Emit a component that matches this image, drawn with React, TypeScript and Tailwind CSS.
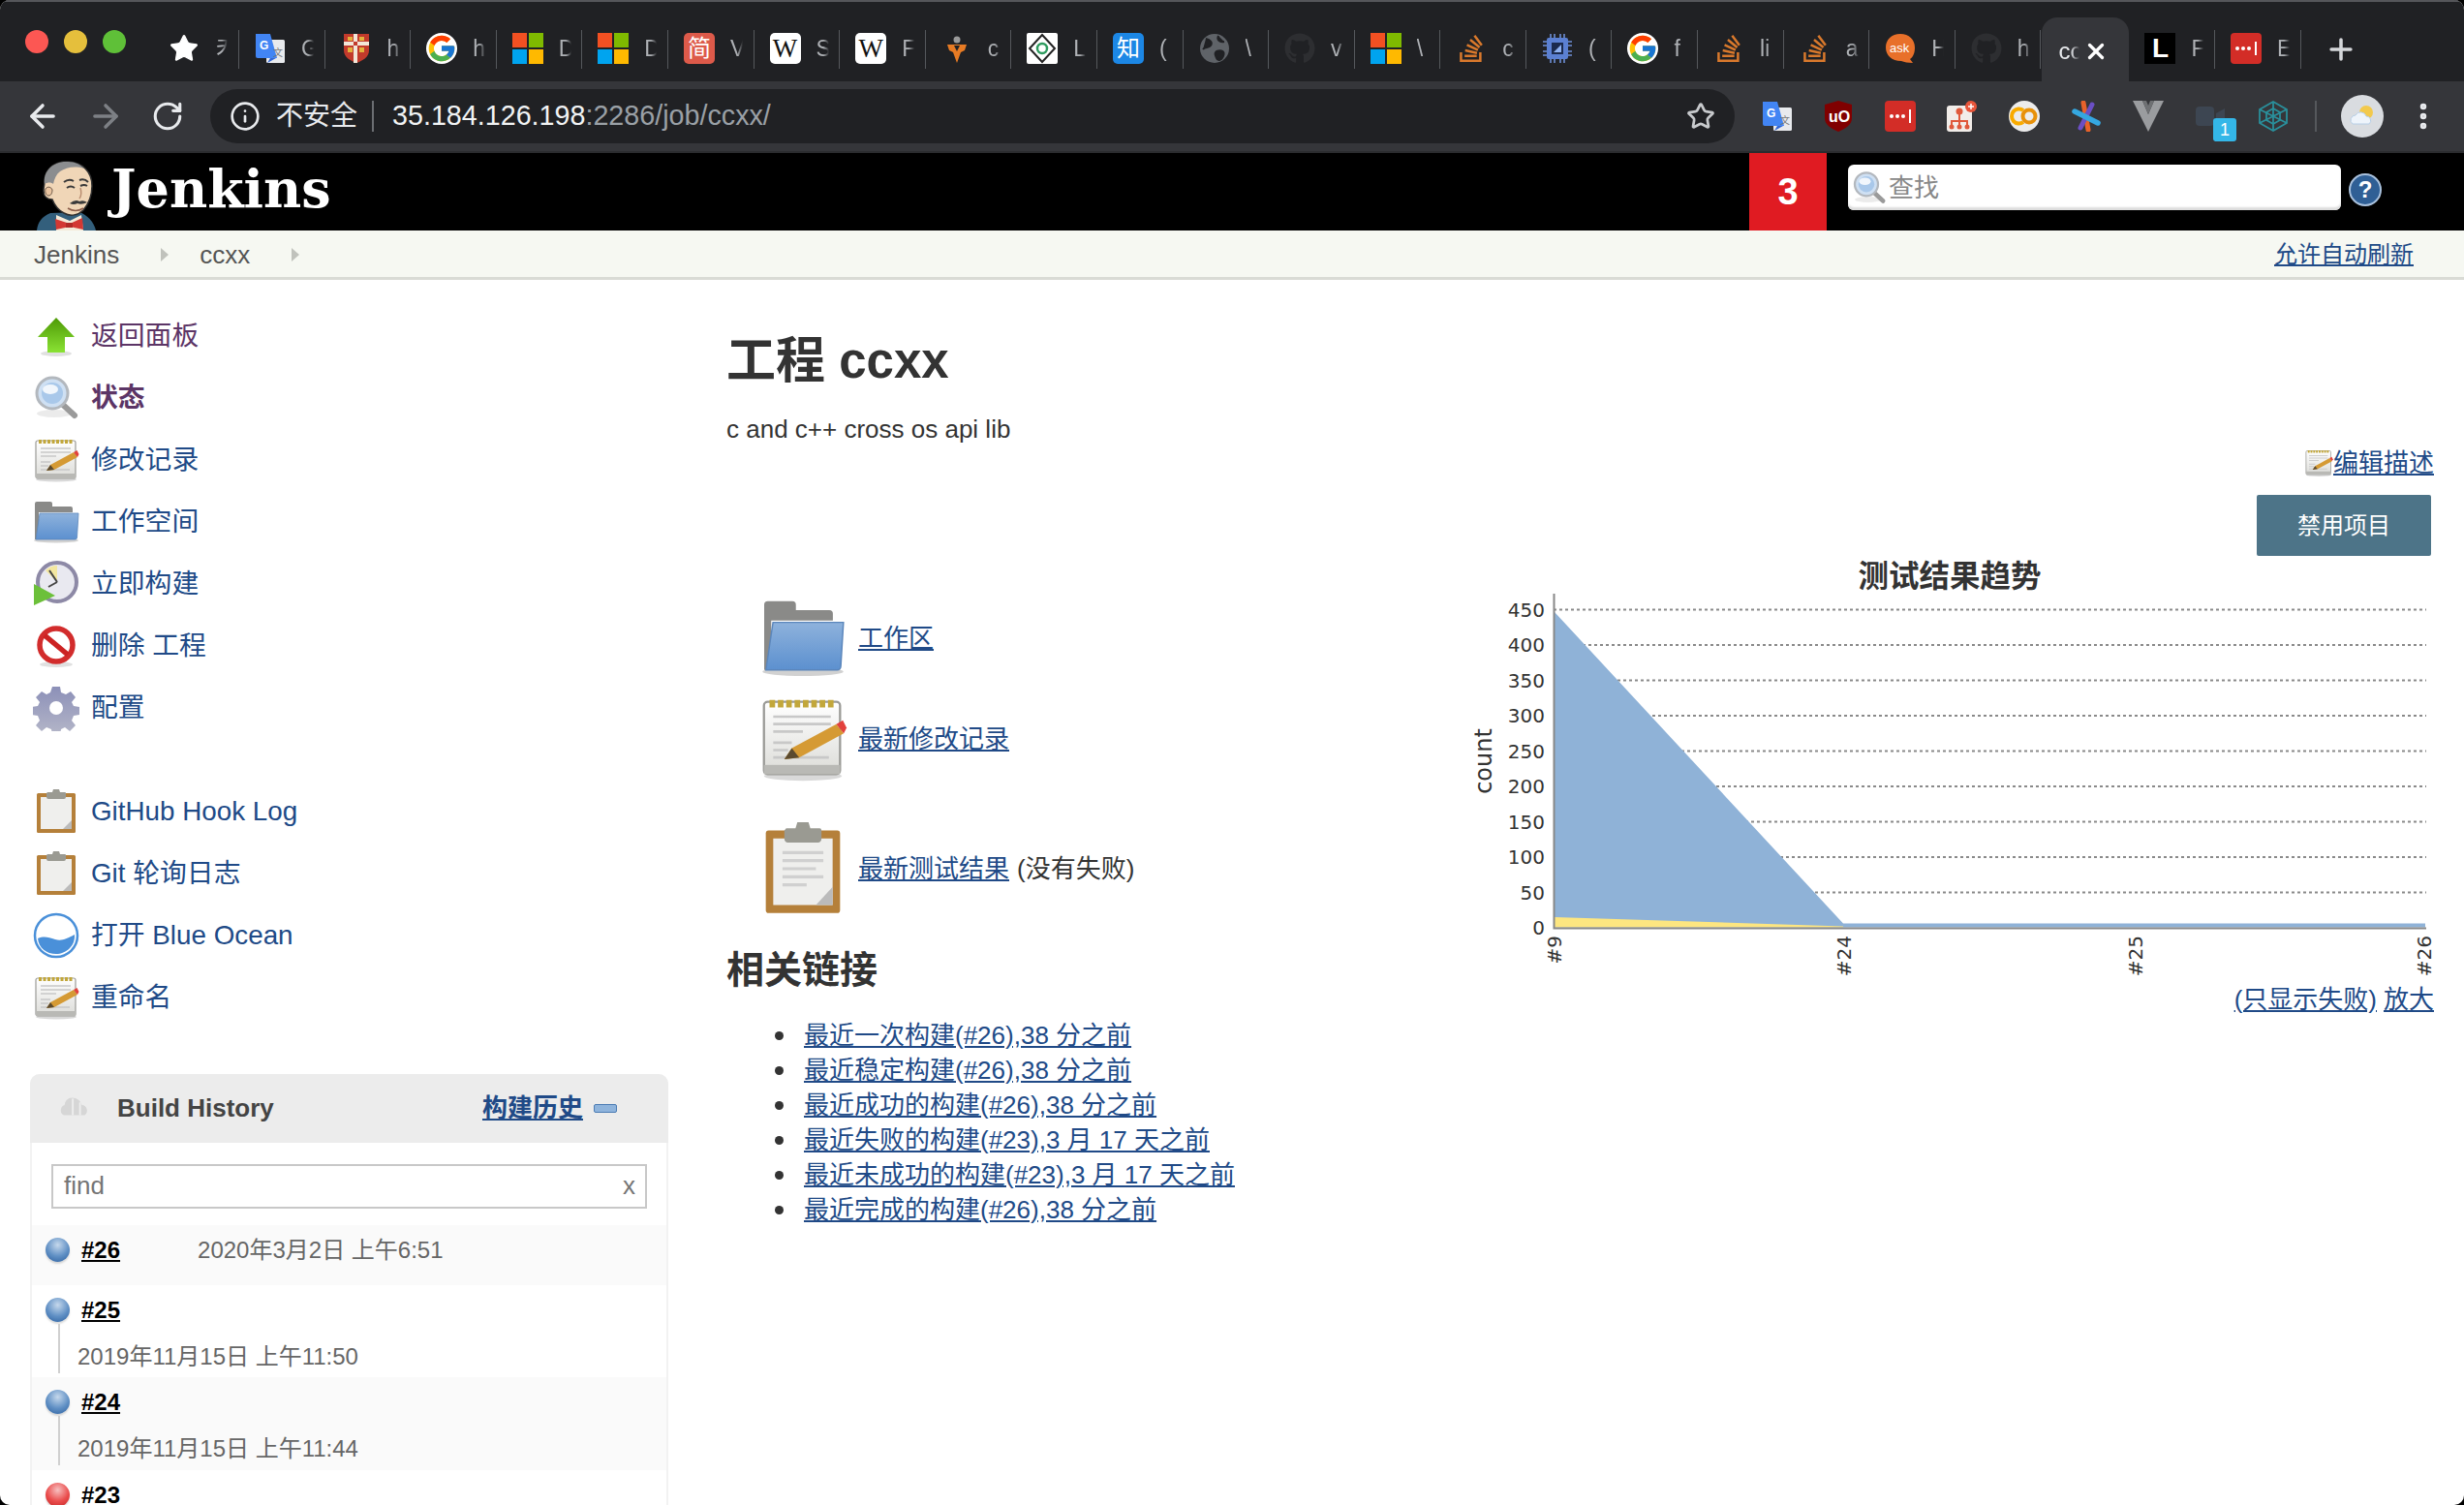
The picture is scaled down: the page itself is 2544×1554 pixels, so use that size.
import React from "react";
import { FcGoogle } from "react-icons/fc";
import { FaGithub, FaStackOverflow } from "react-icons/fa";
import { ArrowLeft, ArrowRight, RotateCw, Info, Star, X, Plus, MoreVertical } from "lucide-react";

const Translate = () => (
  <svg viewBox="0 0 32 32" className="w-8 h-8">
    <rect x="12" y="7" width="19" height="24" rx="1.500" fill="#e8eaed" />
    <path d="M1 1h15l7 25H3a2 2 0 0 1-2-2z" fill="#4285f4" />
    <path d="M16 26l-3 5 9-5z" fill="#3367d6" />
    <text x="5" y="17" fontSize="12" fontWeight="700" fill="#fff">G</text>
    <text x="19" y="24" fontSize="10" fill="#777">文</text>
  </svg>
);
const Shield = () => (
  <svg viewBox="0 0 32 32" className="w-8 h-8">
    <path d="M3 1h26v17c0 7-7 11-13 13C10 29 3 25 3 18z" fill="#c23a2c" />
    <path d="M15 1v30M3 11h26" stroke="#f2e6d8" strokeWidth="4" />
    <path d="M7 4h5v4H7zM19 4h5v4h-5zM7 15h5v5H7zM19 15h5v5h-5z" fill="#e3b23c" />
    <rect x="13" y="9" width="4" height="4" fill="#c23a2c" />
  </svg>
);
const MS = () => (
  <svg viewBox="0 0 32 32" className="w-8 h-8">
    <rect width="15" height="15" fill="#f25022" />
    <rect x="17" width="15" height="15" fill="#7fba00" />
    <rect y="17" width="15" height="15" fill="#00a4ef" />
    <rect x="17" y="17" width="15" height="15" fill="#ffb900" />
  </svg>
);
const Box = ({ bg, color, children, serif }: { bg: string; color: string; children: React.ReactNode; serif?: boolean }) => (
  <div
    className={`w-8 h-8 rounded-[5px] flex items-center justify-center overflow-hidden ${serif ? "[font-family:'Liberation_Serif',serif] text-[27px]" : "text-[24px]"}`}
    style={{ background: bg, color }}
  >
    {children}
  </div>
);
const Princeton = () => (
  <svg viewBox="0 0 32 32" className="w-8 h-8">
    <circle cx="16" cy="7" r="3.500" fill="#9a9a9a" />
    <path d="M6 12h20l-2 6-4 2-4 11-4-11-4-2z" fill="#e77b24" />
    <path d="M13 13l3 6 3-6z" fill="#202124" />
  </svg>
);
const Diamond = () => (
  <svg viewBox="0 0 32 32" className="w-8 h-8">
    <rect width="32" height="32" rx="2" fill="#fff" />
    <path d="M16 2l13 14-13 14L3 16z" fill="none" stroke="#222" strokeWidth="2" />
    <circle cx="16" cy="16" r="5" fill="none" stroke="#2f9b5f" strokeWidth="2.500" />
  </svg>
);
const Globe = () => (
  <svg viewBox="0 0 32 32" className="w-8 h-8">
    <circle cx="16" cy="16" r="15" fill="#5f6368" />
    <path d="M7 6c5 1 7 4 5 7s-6 1-8 4M20 3c-2 4 1 7 6 6M18 19c5-2 9 0 7 5s-6 5-7 2-3-5 0-7z" fill="#202124" stroke="#202124" strokeWidth="2" />
  </svg>
);
const Chip = () => (
  <svg viewBox="0 0 32 32" className="w-8 h-8">
    <path d="M9 1v30M13 1v30M19 1v30M23 1v30M1 9h30M1 13h30M1 19h30M1 23h30" stroke="#6d8fd6" strokeWidth="1.600" />
    <rect x="5" y="5" width="22" height="22" rx="2" fill="#5b80d2" />
    <rect x="10" y="10" width="12" height="12" fill="#1b2a4d" />
    <path d="M12 20l8-8v8z" fill="#8eb0f0" />
  </svg>
);
const Ask = () => (
  <svg viewBox="0 0 32 32" className="w-8 h-8">
    <path d="M16 1c9 0 15 6 15 14 0 6-2 10-5 12l3 4c-5 0-9-1-12-2C7 29 1 23 1 15 1 7 7 1 16 1z" fill="#e8702a" />
    <text x="5" y="20" fontSize="13" fill="#fff">ask</text>
  </svg>
);
const LastPass = () => (
  <div className="w-8 h-8 rounded-[4px] bg-[#d32d27] flex items-center justify-center gap-[2px]">
    <span className="w-[4px] h-[4px] rounded-full bg-white" />
    <span className="w-[4px] h-[4px] rounded-full bg-white" />
    <span className="w-[4px] h-[4px] rounded-full bg-white" />
    <span className="w-[2px] h-[14px] bg-white ml-[2px]" />
  </div>
);
const LBox = () => (
  <div className="w-8 h-8 bg-black flex items-center justify-center text-white font-bold text-[28px] leading-none">L</div>
);

const tabs: [React.ReactNode, string][] = [
  [<Star className="w-8 h-8 text-white" fill="#fff" strokeWidth={1} />, "키"],
  [<Translate />, "G"],
  [<Shield />, "h"],
  [<FcGoogle className="w-8 h-8 bg-white rounded-full" />, "h"],
  [<MS />, "D"],
  [<MS />, "D"],
  [<Box bg="#dd5a4a" color="#fff">简</Box>, "V"],
  [<Box bg="#fff" color="#111" serif>W</Box>, "S"],
  [<Box bg="#fff" color="#111" serif>W</Box>, "F"],
  [<Princeton />, "c"],
  [<Diamond />, "L"],
  [<Box bg="#1c87e5" color="#fff">知</Box>, "("],
  [<Globe />, "\\"],
  [<FaGithub className="w-8 h-8 text-[#2d2e31]" />, "v"],
  [<MS />, "\\"],
  [<FaStackOverflow className="w-8 h-8 text-[#d9792c]" />, "c"],
  [<Chip />, "("],
  [<FcGoogle className="w-8 h-8 bg-white rounded-full" />, "f"],
  [<FaStackOverflow className="w-8 h-8 text-[#d9792c]" />, "li"],
  [<FaStackOverflow className="w-8 h-8 text-[#d9792c]" />, "a"],
  [<Ask />, "H"],
  [<FaGithub className="w-8 h-8 text-[#2d2e31]" />, "h"],
];

const Tab = ({ icon, t }: { icon: React.ReactNode; t: string }) => (
  <div className="w-[88.6px] h-[50px] shrink-0 flex items-center pl-[16px] relative">
    {icon}
    <span className="ml-[16px] w-[13px] overflow-hidden whitespace-nowrap text-[23px] text-[#aeb1b5] [mask-image:linear-gradient(to_right,#000_55%,transparent)]">{t}</span>
    <span className="absolute right-0 top-[6px] h-[40px] w-[1px] bg-[#55585c]" />
  </div>
);

const Dots = () => (
  <>
    <span className="w-[24px] h-[24px] rounded-full bg-[#fc5753]" />
    <span className="w-[24px] h-[24px] rounded-full bg-[#e5bf3c]" />
    <span className="w-[24px] h-[24px] rounded-full bg-[#5fc038]" />
  </>
);

const Mascot = () => (
  <svg viewBox="0 0 62 74" className="w-[62px] h-[74px] shrink-0">
    <path d="M0 74c1-9 5-14 14-18l30-1c8 3 15 10 17 19z" fill="#335f7c" />
    <path d="M20 58l14 6 12-6 2 16H20z" fill="#f4ead8" />
    <path d="M19 62l15 5 13-6 1 12-14-3-14 3z" fill="#d33833" />
    <path d="M30 66h7v5h-7z" fill="#b02a26" />
    <path d="M8 24C8 9 20 2 33 3c14 1 24 10 24 25 0 10-4 19-9 25-5 5-13 7-20 3-6-3-10-9-12-14-5 0-9-3-9-9 0-4 1-7 1-9z" fill="#f0d6b7" stroke="#2f2f2f" strokeWidth="1.500" />
    <path d="M8 26C6 12 18 2 32 3c8 0 13 3 17 7-10-3-19-1-25 3-4 3-6 8-7 13-2-2-6-2-9 0z" fill="#8b8d8f" />
    <path d="M9 31c2-3 6-2 7 1 0 3-1 6-4 6-2 0-4-3-3-7z" fill="#e9c4a0" stroke="#6d5a4a" strokeWidth="1" />
    <path d="M28 24q5-4 10-1M44 22q5-2 9 2" stroke="#3a3a3a" strokeWidth="2" fill="none" />
    <path d="M31 30q4-3 8 0M45 28q4-2 7 0" stroke="#3a3a3a" strokeWidth="2" fill="none" />
    <path d="M45 30q2 7-1 11" stroke="#b98d70" strokeWidth="1.500" fill="none" />
    <path d="M34 46q6-5 10-2 4-2 8 1-6 3-10 1-4 2-8 0z" fill="#3a3a3a" />
    <path d="M32 51q8 5 16 0" stroke="#8c5d4a" strokeWidth="1.500" fill="none" />
  </svg>
);

const Grad = ({ id, a, b }: { id: string; a: string; b: string }) => (
  <linearGradient id={id} x1="0" y1="0" x2="0" y2="1">
    <stop offset="0" stopColor={a} />
    <stop offset="1" stopColor={b} />
  </linearGradient>
);

const UpIcon = () => (
  <svg viewBox="0 0 48 48" className="w-12 h-12">
    <defs><Grad id="up" a="#4e9a06" b="#8ae234" /></defs>
    <ellipse cx="24" cy="42" rx="16" ry="3" fill="#000" opacity=".12" />
    <path d="M24 5L43 25H33V41H15V25H5z" fill="url(#up)" />
  </svg>
);
const Magnify = ({ cls = "w-12 h-12" }: { cls?: string }) => (
  <svg viewBox="0 0 48 48" className={cls}>
    <ellipse cx="22" cy="40" rx="18" ry="4" fill="#000" opacity=".08" />
    <path d="M30 30l13 12" stroke="#9a9a9a" strokeWidth="6" strokeLinecap="round" />
    <circle cx="20" cy="19" r="16" fill="#cfe0f3" stroke="#b3b8be" strokeWidth="3" />
    <circle cx="20" cy="19" r="11" fill="#a9c8ea" />
    <ellipse cx="18" cy="15" rx="8" ry="5" fill="#f1f6fc" />
  </svg>
);
const Notepad = ({ cls = "w-12 h-12" }: { cls?: string }) => (
  <svg viewBox="0 0 48 48" className={cls}>
    <defs><Grad id="pad" a="#ffffff" b="#dcdcd8" /></defs>
    <ellipse cx="24" cy="44" rx="21" ry="2.500" fill="#000" opacity=".15" />
    <rect x="3" y="4" width="41" height="39" rx="2" fill="url(#pad)" stroke="#9b9b97" strokeWidth="1.200" />
    <rect x="3" y="38" width="41" height="5" fill="#b9b9b5" />
    <path d="M6 5h35" stroke="#c2a73b" strokeWidth="4" strokeDasharray="3 1.500" />
    <path d="M8 12h31M8 16h31M8 20h16M8 26h10M8 30h8M8 34h30" stroke="#c8c8c8" strokeWidth="1.400" />
    <path d="M14 35l4-6L42 16l4 5-24 13z" fill="#d59a34" />
    <path d="M14 35l4-6 4 5z" fill="#5b4a2f" />
    <path d="M42 16l4 5 1.500-3-2-4z" fill="#e2413c" />
  </svg>
);
const Folder = ({ cls = "w-12 h-12" }: { cls?: string }) => (
  <svg viewBox="0 0 48 44" className={cls}>
    <defs><Grad id="fold" a="#8eb2dc" b="#5c90cf" /></defs>
    <ellipse cx="24" cy="41" rx="23" ry="2.500" fill="#000" opacity=".18" />
    <path d="M2 3a2 2 0 0 1 2-2h14a2 2 0 0 1 2 2v3h19a2 2 0 0 1 2 2v4H2z M2 12h4v28H2z" fill="#8a8a88" />
    <path d="M7 13h40l-1.500 25a2 2 0 0 1-2 2H3z" fill="url(#fold)" stroke="#5b86bb" strokeWidth=".8" />
  </svg>
);
const Clock = () => (
  <svg viewBox="0 0 48 48" className="w-12 h-12">
    <circle cx="25" cy="22" r="20" fill="#e9e9f0" stroke="#8d89a6" strokeWidth="4" />
    <path d="M25 22V5a17 17 0 0 0-12 5z" fill="#f3e7a0" />
    <path d="M25 22L17 10M25 22l-9 5" stroke="#444" strokeWidth="2" />
    <path d="M1 24L23 36 1 46z" fill="#6cc03a" />
  </svg>
);
const NoEntry = () => (
  <svg viewBox="0 0 48 48" className="w-12 h-12">
    <ellipse cx="24" cy="43" rx="17" ry="3" fill="#000" opacity=".12" />
    <circle cx="24" cy="23" r="17" fill="#fff" stroke="#d22c2c" strokeWidth="5.500" />
    <path d="M12 13l24 20" stroke="#cc2222" strokeWidth="5.500" />
  </svg>
);
const Gear = () => (
  <svg viewBox="0 0 48 48" className="w-12 h-12">
    <defs><Grad id="gear" a="#8c90b8" b="#b4b6c8" /></defs>
    <path d="M20 2h8l1 6 5 2 5-3 5 6-4 5 2 4 6 1v8l-6 1-2 5 4 5-6 6-5-4-4 2-1 6h-8l-1-6-5-2-5 4-6-6 4-5-2-5-6-1v-8l6-1 2-4-4-5 6-6 5 3 4-2z" fill="url(#gear)" />
    <circle cx="24" cy="24" r="7" fill="#fff" />
  </svg>
);
const Clipboard = ({ cls = "w-12 h-12", lines }: { cls?: string; lines?: boolean }) => (
  <svg viewBox="0 0 48 48" className={cls} preserveAspectRatio="none">
    <rect x="4" y="5" width="40" height="41" rx="1.500" fill="#b5803a" />
    <rect x="8" y="9" width="32" height="33" fill="#efefed" />
    {lines && <path d="M13 16h22M13 20h22M13 24h18M13 28h22M13 32h13" stroke="#d0d0d0" strokeWidth="1.500" />}
    <path d="M31 42l9-9v9z" fill="#bbb" />
    <path d="M15 4h5l1-3h6l1 3h5a1 1 0 0 1 1 1v4a2 2 0 0 1-2 2H16a2 2 0 0 1-2-2V5z" fill="#9a9a92" />
  </svg>
);
const Ocean = () => (
  <svg viewBox="0 0 48 48" className="w-12 h-12">
    <circle cx="24" cy="24" r="22" fill="#fff" stroke="#4a90d9" strokeWidth="2.500" />
    <path d="M5 27c7-3 11-1 18 1s12-1 20-5c1 12-9 20-19 20S6 37 5 27z" fill="#4a90d9" />
  </svg>
);
const Ball = ({ red }: { red?: boolean }) => (
  <div
    className={`w-[25px] h-[25px] mt-[1px] rounded-full shrink-0 shadow-[0_2px_2px_rgba(0,0,0,0.15)] ${
      red
        ? "bg-[radial-gradient(circle_at_50%_30%,#f7c0c0,#ea4b4b_55%,#c02626)]"
        : "bg-[radial-gradient(circle_at_50%_30%,#c5d8ec,#5f8fc4_55%,#2c5f9e)]"
    }`}
  />
);

const side: [React.ReactNode, string, string?][] = [
  [<UpIcon />, "返回面板", "v"],
  [<Magnify />, "状态", "b"],
  [<Notepad />, "修改记录"],
  [<Folder />, "工作空间"],
  [<Clock />, "立即构建"],
  [<NoEntry />, "删除 工程"],
  [<Gear />, "配置"],
];
const side2: [React.ReactNode, string][] = [
  [<Clipboard />, "GitHub Hook Log"],
  [<Clipboard />, "Git 轮询日志"],
  [<Ocean />, "打开 Blue Ocean"],
  [<Notepad />, "重命名"],
];

const SideRow = ({ icon, t, k }: { icon: React.ReactNode; t: string; k?: string }) => (
  <div className="h-16 flex items-center pl-[3px] gap-[12px]">
    <div className="w-12 h-12 shrink-0 flex items-center">{icon}</div>
    <span
      className={`text-[27.8px] whitespace-nowrap ${
        k === "v" ? "text-[#5c3566]" : k === "b" ? "text-[#5c3566] font-bold" : "text-[#204a87]"
      }`}
    >
      {t}
    </span>
  </div>
);

const links = [
  "最近一次构建(#26),38 分之前",
  "最近稳定构建(#26),38 分之前",
  "最近成功的构建(#26),38 分之前",
  "最近失败的构建(#23),3 月 17 天之前",
  "最近未成功的构建(#23),3 月 17 天之前",
  "最近完成的构建(#26),38 分之前",
];

const Chart = () => {
  const ticks = [450, 400, 350, 300, 250, 200, 150, 100, 50, 0];
  return (
    <svg width="1010" height="436" className="mt-[2px] overflow-visible">
      <g transform="translate(-1503 -576)">
        <text x="2013" y="606" textAnchor="middle" fontSize="31.5" fontWeight="700" fill="#333">测试结果趋势</text>
        {ticks.slice(0, 9).map((t, i) => (
          <line key={t} x1="1604" x2="2505" y1={629.5 + i * 36.5} y2={629.5 + i * 36.5} stroke="#8a8a8a" strokeWidth="2" strokeDasharray="3 3" />
        ))}
        <path d="M1605 632L1903 953.5H2504V957.500H1605z" fill="#8fb2d7" />
        <path d="M1605 947L1903 956.5V957.500H1605z" fill="#fde680" />
        <path d="M1604.500 613V958.500H2505" stroke="#888" strokeWidth="2" fill="none" />
        {ticks.map((t, i) => (
          <text key={t} x="1595" y={636.5 + i * 36.5} textAnchor="end" fontSize="20" fill="#333" className="[font-family:'DejaVu_Sans',sans-serif]">{t}</text>
        ))}
        <text transform="translate(1540 786) rotate(-90)" textAnchor="middle" fontSize="24" fill="#333" className="[font-family:'DejaVu_Sans',sans-serif]">count</text>
        {[["#9", 1605], ["#24", 1904], ["#25", 2205], ["#26", 2503]].map(([l, x]) => (
          <text key={l as string} transform={`translate(${(x as number) + 7} 966) rotate(-90)`} textAnchor="end" fontSize="20" fill="#333" className="[font-family:'DejaVu_Sans',sans-serif]">{l}</text>
        ))}
      </g>
    </svg>
  );
};

const Ext = ({ children, x }: { children: React.ReactNode; x: string }) => (
  <div className={`w-8 h-8 shrink-0 flex items-center justify-center ${x}`}>{children}</div>
);

export default function App() {
  return (
    <div className="w-[2544px] h-[1554px] overflow-hidden bg-black text-[#333] [font-family:'Liberation_Sans','Noto_Sans_CJK_SC',sans-serif]">
      <div className="w-full h-full rounded-[10px] overflow-hidden bg-white flex flex-col">
        {/* tab strip */}
        <div className="h-[84px] shrink-0 bg-[#202124] border-t-2 border-[#55565a] flex relative">
          <div className="w-[158.4px] shrink-0 h-[82px] flex items-center gap-[16px] pl-[26px]">
            <Dots />
          </div>
          <div className="flex items-start pt-[23px]">
            {tabs.map(([ic, t], i) => (
              <Tab key={i} icon={ic} t={t} />
            ))}
            <div className="w-[1px]" />
          </div>
          <div className="self-end w-[90px] h-[66px] shrink-0 bg-[#35363a] rounded-t-[16px] flex items-center pl-[17px] pt-[3px]">
            <span className="text-[24px] text-[#e8eaed] w-[22px] overflow-hidden [mask-image:linear-gradient(to_right,#000_60%,transparent)]">cc</span>
            <X className="w-[26px] h-[26px] text-white ml-[4px]" strokeWidth={3} />
          </div>
          <div className="flex items-start pt-[23px]">
            <Tab icon={<LBox />} t="F" />
            <Tab icon={<LastPass />} t="E" />
          </div>
          <Plus className="w-[34px] h-[34px] text-[#d5d7da] mt-[32px] ml-[24px]" strokeWidth={2.5} />
        </div>
        {/* toolbar */}
        <div className="h-[74px] shrink-0 bg-[#35363a] flex items-center relative border-b-2 border-[#2b2c2f]">
          <ArrowLeft className="w-[38px] h-[38px] text-[#e8eaed] ml-[25px]" strokeWidth={2.2} />
          <ArrowRight className="w-[38px] h-[38px] text-[#7d8085] ml-[27px]" strokeWidth={2.2} />
          <RotateCw className="w-[34px] h-[34px] text-[#e8eaed] ml-[28px]" strokeWidth={2.2} />
          <div className="ml-[27px] w-[1574px] h-[56px] rounded-full bg-[#202124] flex items-center pl-[20px] shrink-0">
            <Info className="w-[32px] h-[32px] text-[#e8eaed]" strokeWidth={2} />
            <span className="ml-[16px] text-[#e8eaed] text-[28px]">不安全</span>
            <span className="ml-[15px] w-[2px] h-[32px] bg-[#6b6e72]" />
            <span className="ml-[19px] text-[#f1f3f4] text-[28.7px]">
              35.184.126.198<span className="text-[#9aa0a6]">:2286/job/ccxx/</span>
            </span>
            <Star className="w-[30px] h-[30px] text-[#c8cacd] ml-auto mr-[20px]" strokeWidth={2.2} />
          </div>
          <Ext x="ml-[28px]"><Translate /></Ext>
          <Ext x="ml-[31px]">
            <svg viewBox="0 0 32 32" className="w-8 h-8">
              <path d="M16 0l14 4v14c0 7-7 11-14 14C9 29 2 25 2 18V4z" fill="#800000" />
              <text x="6" y="22" fontSize="16" fontWeight="700" fill="#fff">uO</text>
            </svg>
          </Ext>
          <Ext x="ml-[32px]"><LastPass /></Ext>
          <Ext x="ml-[31px]">
            <svg viewBox="0 0 32 32" className="w-8 h-8">
              <rect x="1" y="5" width="26" height="27" rx="3" fill="#f2ede9" />
              <path d="M14 10v10M6 26v-5h16v5M14 20v6" stroke="#e0593b" strokeWidth="2" fill="none" />
              <circle cx="14" cy="11" r="3.500" fill="#e0593b" />
              <circle cx="6" cy="27" r="2.500" fill="#e0593b" />
              <circle cx="14" cy="27" r="2.500" fill="#e0593b" />
              <circle cx="22" cy="27" r="2.500" fill="#e0593b" />
              <circle cx="26" cy="6" r="6" fill="#e8553a" />
              <path d="M26 3v6M23 6h6" stroke="#fff" strokeWidth="1.500" />
            </svg>
          </Ext>
          <Ext x="ml-[33px]">
            <svg viewBox="0 0 32 32" className="w-8 h-8">
              <circle cx="16" cy="16" r="16" fill="#ececec" />
              <path d="M15 10a7.500 7.500 0 1 0 0 12" fill="none" stroke="#f9ab00" strokeWidth="4" />
              <circle cx="21" cy="16" r="6.500" fill="none" stroke="#e8910a" strokeWidth="4" />
            </svg>
          </Ext>
          <Ext x="ml-[32px]">
            <svg viewBox="0 0 32 32" className="w-8 h-8">
              <path d="M13 2l5 28" stroke="#e8622a" strokeWidth="5" strokeLinecap="round" />
              <path d="M22 4L10 28" stroke="#6b4fc4" strokeWidth="5" strokeLinecap="round" />
              <path d="M4 11l24 12" stroke="#35a7e0" strokeWidth="5.500" strokeLinecap="round" />
            </svg>
          </Ext>
          <Ext x="ml-[32px]">
            <svg viewBox="0 0 32 32" className="w-8 h-8">
              <path d="M0 0h10l6 14 6-14h10L16 32z" fill="#9a9c9f" />
              <path d="M10 0h4l2 5 2-5h4l-6 14z" fill="#6f7174" />
            </svg>
          </Ext>
          <Ext x="ml-[32px] relative">
            <svg viewBox="0 0 32 32" className="w-8 h-8">
              <rect x="1" y="6" width="19" height="20" rx="4" fill="#3d4652" />
              <path d="M22 13l9-5v16l-9-5z" fill="#3d4652" />
            </svg>
            <span className="absolute left-[19px] top-[18px] w-[24px] h-[24px] rounded-[3px] bg-[#34b7e8] text-white text-[18px] leading-[24px] text-center">1</span>
          </Ext>
          <Ext x="ml-[33px]">
            <svg viewBox="0 0 32 32" className="w-8 h-8" fill="none" stroke="#2a8f9b" strokeWidth="1.800">
              <path d="M16 1l14 8v14l-14 8-14-8V9z" />
              <path d="M16 8l7 4v8l-7 4-7-4v-8z" />
              <path d="M16 1v30M2 9l28 14M30 9L2 23" />
            </svg>
          </Ext>
          <span className="ml-[27px] w-[2px] h-[32px] bg-[#55585c]" />
          <div className="ml-[25px] w-[44px] h-[44px] rounded-full bg-[#d9dce0] flex items-center justify-center shrink-0">
            <svg viewBox="0 0 32 32" className="w-8 h-8">
              <circle cx="20" cy="12" r="7" fill="#f2c94c" />
              <path d="M6 24a5 5 0 0 1 3-9 6 6 0 0 1 11 1 4.500 4.500 0 0 1 3 8z" fill="#eef4fb" stroke="#b8cfe6" />
            </svg>
          </div>
          <MoreVertical className="w-[34px] h-[34px] text-[#e8eaed] ml-[24px]" strokeWidth={2.6} />
        </div>
        {/* jenkins header */}
        <div className="h-[80px] shrink-0 bg-black flex items-end relative">
          <div className="ml-[38px] flex items-end w-[1768px]">
            <Mascot />
            <span className="ml-[15px] mb-[6px] text-white font-bold text-[54px] leading-[74px] [font-family:'DejaVu_Serif',serif]">Jenkins</span>
          </div>
          <div className="w-[80px] h-[80px] bg-[#e01b22] text-white font-bold text-[38px] flex items-center justify-center shrink-0">3</div>
          <div className="ml-[22px] mb-[21px] w-[509px] h-[47px] rounded-[6px] bg-white shadow-[inset_0_-3px_2px_#ddd] flex items-center pl-[4px]">
            <Magnify cls="w-[36px] h-[36px] shrink-0" />
            <span className="ml-[2px] pt-[2px] text-[26px] text-[#888]">查找</span>
          </div>
          <div className="ml-[8px] mb-[25px] w-[34px] h-[34px] rounded-full bg-[#2f5f95] border-2 border-[#a9c1dd] text-white font-bold text-[24px] flex items-center justify-center">?</div>
        </div>
        {/* breadcrumb */}
        <div className="h-[51px] shrink-0 bg-[#f6f8f2] border-b-[3px] border-[#d9dbd5] flex items-center text-[26px] text-[#555] pl-[35px] pr-[52px] pt-[2px]">
          <span>Jenkins</span>
          <span className="ml-[43px] w-0 h-0 border-y-[7px] border-y-transparent border-l-[8px] border-l-[#c0c2bc]" />
          <span className="ml-[32px]">ccxx</span>
          <span className="ml-[43px] w-0 h-0 border-y-[7px] border-y-transparent border-l-[8px] border-l-[#c0c2bc]" />
          <a className="ml-auto text-[24px] text-[#204a87] underline">允许自动刷新</a>
        </div>
        {/* body */}
        <div className="flex-1 flex min-h-0">
          <div className="w-[750px] shrink-0 pl-[31px] pr-[60px] pt-[25.5px]">
            {side.map(([ic, t, k]) => (
              <SideRow key={t} icon={ic} t={t} k={k} />
            ))}
            <div className="h-[43px]" />
            {side2.map(([ic, t]) => (
              <SideRow key={t} icon={ic} t={t} />
            ))}
            <div className="mt-[47px] border-2 border-t-0 border-[#f2f2f2] rounded-t-[10px]">
              <div className="h-[71px] bg-[#ececec] rounded-t-[10px] flex items-center pl-[31px] pr-[53px] -mx-[2px]">
                <svg viewBox="0 0 32 24" className="w-[30px] h-[24px] mb-[4px]">
                  <path d="M4 22a6 6 0 0 1 1-11 8 8 0 0 1 8-8c6 0 9 3 11 8a6 6 0 0 1 3 11z" fill="#d6d6d6" />
                  <path d="M14 4v18M22 8v14" stroke="#eee" strokeWidth="2" />
                </svg>
                <span className="ml-[29px] font-bold text-[26px] text-[#444]">Build History</span>
                <a className="ml-auto font-bold text-[26px] text-[#204a87] underline">构建历史</a>
                <span className="ml-[11px] w-[24px] h-[9px] rounded-[2px] bg-[#8fb4dc] border border-[#4c7cb4]" />
              </div>
              <div className="pt-[22px] px-[20px] pb-[17px]">
                <div className="h-[46px] border-2 border-[#c8c8c8] flex items-center pl-[11px] pr-[10px] text-[26px] text-[#757575]">
                  <span>find</span>
                  <span className="ml-auto">x</span>
                </div>
              </div>
              <div className="h-[62px] bg-[#fafafa] flex items-start pl-[14px] pt-[12px]">
                <Ball />
                <a className="pl-[12px] font-bold text-[24px] text-black underline leading-[27px]">#26</a>
                <span className="ml-[80px] text-[24px] text-[#666] leading-[27px]">2020年3月2日 上午6:51</span>
              </div>
              {[
                ["#25", "2019年11月15日 上午11:50", "bg-white"],
                ["#24", "2019年11月15日 上午11:44", "bg-[#fafafa]"],
              ].map(([n, d, b]) => (
                <div key={n} className={`h-[95.5px] relative pl-[14px] pt-[12px] ${b}`}>
                  <div className="flex items-start">
                    <Ball />
                    <a className="pl-[12px] font-bold text-[24px] text-black underline leading-[27px]">{n}</a>
                  </div>
                  <span className="absolute left-[27px] top-[40px] w-[2px] h-[51px] bg-[#d0d0d0]" />
                  <div className="pl-[33px] mt-[21px] text-[24px] text-[#666] leading-[27px] whitespace-nowrap">{d}</div>
                </div>
              ))}
              <div className="h-[95px] pl-[14px] pt-[12px] flex items-start">
                <Ball red />
                <a className="pl-[12px] font-bold text-[24px] text-black underline leading-[27px]">#23</a>
              </div>
            </div>
          </div>
          <div className="flex-1 flex justify-between min-w-0 pr-[31px]">
            <div className="w-[700px] shrink-0 pt-[54px]">
              <h1 className="text-[51px] leading-[60px] font-bold text-[#333]">工程 ccxx</h1>
              <p className="mt-[25px] text-[26px] leading-[30px] text-[#333]">c and c++ cross os api lib</p>
              <div className="mt-[154px] ml-[37px]">
                <div className="h-[94px] flex items-center">
                  <Folder cls="w-[88px] h-[80px] -ml-[2px] -mr-[2px] shrink-0" />
                  <a className="ml-[15px] text-[26px] text-[#204a87] underline">工作区</a>
                </div>
                <div className="h-[94px] mt-[10px] flex items-center">
                  <Notepad cls="w-[92px] h-[92px] -ml-[4px] -mr-[4px] shrink-0" />
                  <a className="ml-[15px] text-[26px] text-[#204a87] underline">最新修改记录</a>
                </div>
                <div className="h-[94px] mt-[40px] flex items-center">
                  <Clipboard cls="w-[92px] h-[100px] -my-[3px] -ml-[4px] -mr-[4px] shrink-0" lines />
                  <a className="ml-[15px] text-[26px] text-[#204a87] underline">最新测试结果</a>
                  <span className="ml-[8px] text-[26px] text-[#333]">(没有失败)</span>
                </div>
              </div>
              <h2 className="mt-[35px] text-[39px] leading-[46px] font-bold text-[#333]">相关链接</h2>
              <ul className="mt-[26px] pl-[50px] text-[26px] leading-[36px] text-[#333]">
                {links.map((l) => (
                  <li key={l} className="flex items-center gap-[21px]">
                    <span className="w-[9px] h-[9px] rounded-full bg-[#333] shrink-0" />
                    <a className="text-[#204a87] underline whitespace-nowrap">{l}</a>
                  </li>
                ))}
              </ul>
            </div>
            <div className="flex flex-col items-end pt-[173px]">
              <div className="h-[32px] flex items-center">
                <Notepad cls="w-[30px] h-[30px]" />
                <a className="text-[26px] text-[#204a87] underline">编辑描述</a>
              </div>
              <button className="mt-[17px] mr-[3px] w-[180px] h-[63px] rounded-[2px] bg-[#4d7488] text-white text-[24px]">禁用项目</button>
              <Chart />
              <div className="mt-[4px] h-[32px] flex items-center text-[26px] text-[#204a87]">
                <a className="underline">(只显示失败)</a>
                <a className="underline ml-[7px]">放大</a>
              </div>
            </div>
          </div>
        </div>
      </div>
    </div>
  );
}
